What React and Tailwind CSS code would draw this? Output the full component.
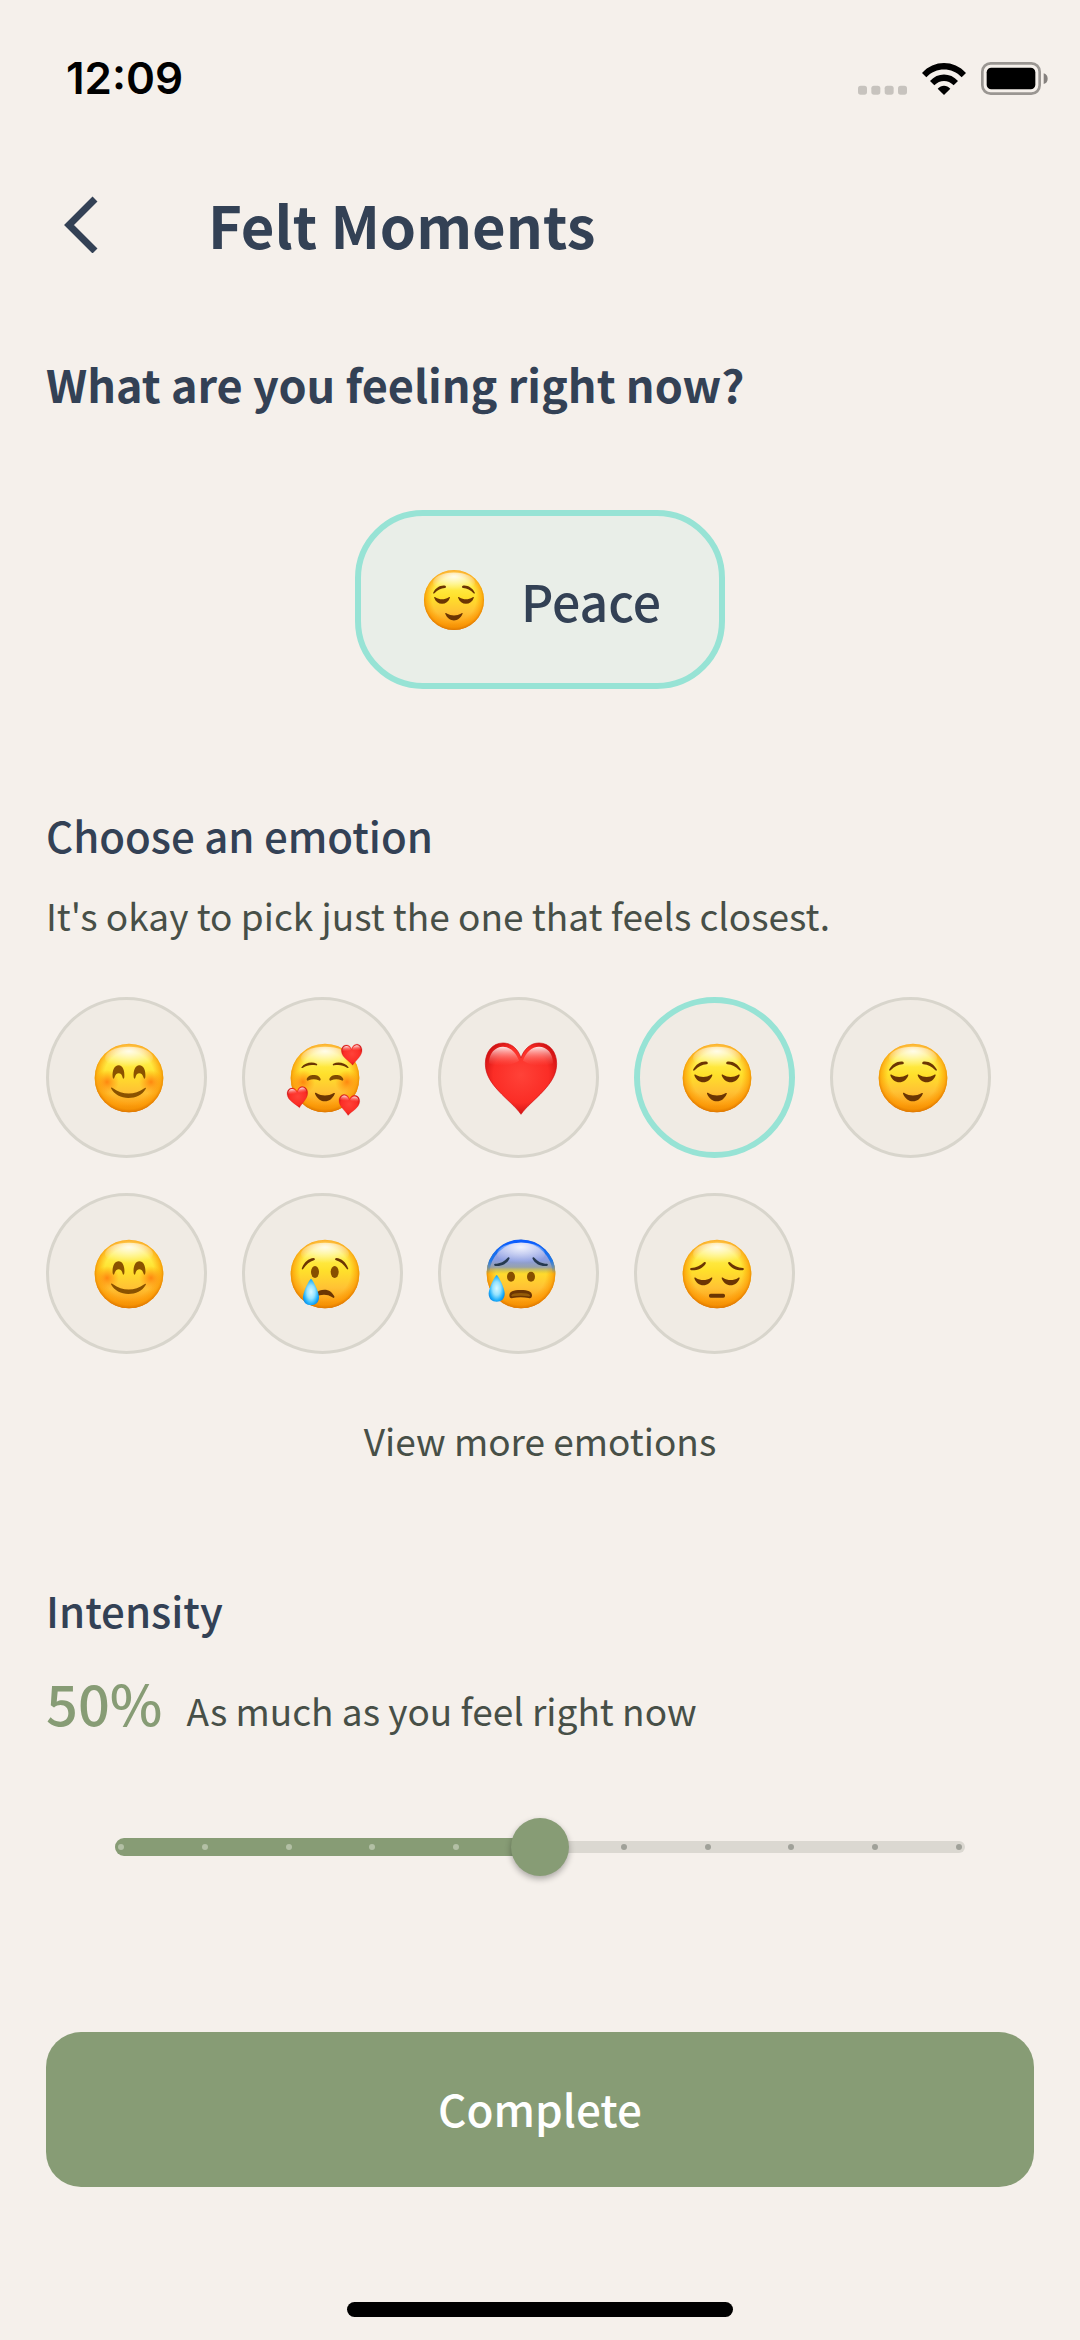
import { useState } from "react";

const INK = "#6b3503";

function FaceBase({ id, cheeks, worried }) {
  return (
    <>
      <defs>
        <linearGradient id={`${id}-skin`} x1="0" y1="0" x2="0" y2="1">
          <stop offset="0" stopColor="#ffe98a" />
          <stop offset="0.22" stopColor="#fff04f" />
          <stop offset="0.45" stopColor="#ffe02b" />
          <stop offset="0.7" stopColor="#ffc234" />
          <stop offset="0.88" stopColor="#fda418" />
          <stop offset="1" stopColor="#e07c06" />
        </linearGradient>
        <radialGradient id={`${id}-rim`} cx="0.5" cy="0.48" r="0.52">
          <stop offset="0.7" stopColor="#ff9a00" stopOpacity="0" />
          <stop offset="0.9" stopColor="#fb9600" stopOpacity="0.65" />
          <stop offset="1" stopColor="#de7700" />
        </radialGradient>
        <radialGradient id={`${id}-shine`} cx="0.5" cy="0.2" r="0.7">
          <stop offset="0" stopColor="#fff" stopOpacity="0.85" />
          <stop offset="1" stopColor="#fff" stopOpacity="0" />
        </radialGradient>
        <radialGradient id={`${id}-cheek`}>
          <stop offset="0" stopColor="#ff7a0a" stopOpacity="0.85" />
          <stop offset="1" stopColor="#ff8a0a" stopOpacity="0" />
        </radialGradient>
        <linearGradient id={`${id}-blue`} x1="0" y1="0" x2="0" y2="1">
          <stop offset="0" stopColor="#a9b4f2" />
          <stop offset="0.3" stopColor="#8c9de0" />
          <stop offset="0.4" stopColor="#8c9bb8" stopOpacity="0.9" />
          <stop offset="0.5" stopColor="#b5a94a" stopOpacity="0" />
        </linearGradient>
        <linearGradient id={`${id}-edge`} x1="0" y1="0" x2="0" y2="1">
          <stop offset="0" stopColor="#0a5cff" />
          <stop offset="0.3" stopColor="#1f78e6" />
          <stop offset="0.5" stopColor="#6a8d80" stopOpacity="0" />
        </linearGradient>
      </defs>
      <circle cx="120" cy="120" r="103" fill={`url(#${id}-skin)`} />
      <circle cx="120" cy="120" r="103" fill={`url(#${id}-rim)`} />
      {worried ? (
        <>
          <circle cx="120" cy="120" r="103" fill={`url(#${id}-blue)`} />
          <circle cx="120" cy="120" r="99" fill="none" stroke={`url(#${id}-edge)`} strokeWidth="9" />
        </>
      ) : null}
      <ellipse cx="120" cy="60" rx="72" ry="34" fill={`url(#${id}-shine)`} />
      {cheeks ? (
        <>
          <circle cx="54" cy="132" r="36" fill={`url(#${id}-cheek)`} />
          <circle cx="186" cy="132" r="36" fill={`url(#${id}-cheek)`} />
        </>
      ) : null}
    </>
  );
}

// closed eyelids, shared by the calm and the pensive face
function ClosedEyes({ y }) {
  return (
    <g transform={`translate(0 ${y})`} fill={INK}>
      <path d="M52 0C51-3 54-3 57-1C70 7 88 7 101-1C104-3 107-3 106 0C101 14 91 21 79 21C67 21 57 14 52 0Z" />
      <path d="M134 0C133-3 136-3 139-1C152 7 170 7 183-1C186-3 189-3 188 0C183 14 173 21 161 21C149 21 139 14 134 0Z" />
    </g>
  );
}

function SmallMouth() {
  return (
    <path
      d="M90 167C89 164 92 164 95 166C110 175 130 175 145 166C148 164 151 164 149 168C143 182 132 190 120 190C108 190 96 182 90 167Z"
      fill={INK}
    />
  );
}

function Heart({ x, y, rotate = 0, scale = 1, id }) {
  return (
    <g transform={`translate(${x} ${y}) rotate(${rotate}) scale(${scale})`}>
      <defs>
        <radialGradient id={`${id}-red`} cx="0.5" cy="0.45" r="0.6">
          <stop offset="0" stopColor="#ff4238" />
          <stop offset="0.65" stopColor="#fb2d26" />
          <stop offset="1" stopColor="#c60b0e" />
        </radialGradient>
        <linearGradient id={`${id}-gloss`} x1="0" y1="0" x2="0" y2="1">
          <stop offset="0" stopColor="#fff" stopOpacity="0.9" />
          <stop offset="1" stopColor="#ff6a60" stopOpacity="0" />
        </linearGradient>
      </defs>
      <path
        d="M0 109C-14 88-42 66-68 38C-92 12-107-13-107-43C-107-78-86-105-54-105C-28-105-8-86 0-60C8-86 28-105 54-105C86-105 107-78 107-43C107-13 92 12 68 38C42 66 14 88 0 109Z"
        fill={`url(#${id}-red)`}
        stroke="#cf0d10"
        strokeWidth="2"
      />
      <path
        d="M-96-44C-96-74-78-94-54-94C-32-94-14-76-6-52C-30-36-70-32-96-44ZM96-44C96-74 78-94 54-94C32-94 14-76 6-52C30-36 70-32 96-44Z"
        fill={`url(#${id}-gloss)`}
      />
    </g>
  );
}

function Tear({ x, y, id }) {
  return (
    <g transform={`translate(${x} ${y})`}>
      <defs>
        <radialGradient id={`${id}-tear`} cx="0.5" cy="0.5" r="0.56">
          <stop offset="0" stopColor="#d8f8ff" />
          <stop offset="0.45" stopColor="#93e2ff" />
          <stop offset="0.8" stopColor="#1fb0fa" />
          <stop offset="1" stopColor="#0a8ae8" />
        </radialGradient>
      </defs>
      <path d="M0 0C3 0 24 38 24 56C24 71 14 80 0 80C-14 80-24 71-24 56C-24 38-3 0 0 0Z" fill={`url(#${id}-tear)`} />
    </g>
  );
}

function Brows({ d }) {
  return (
    <g fill={INK}>
      <path d={d} />
      <path d={d} transform="translate(240 0) scale(-1 1)" />
    </g>
  );
}

function Emoji({ kind, id, className }) {
  return (
    <svg viewBox="0 0 240 240" className={className} aria-hidden="true">
      {kind === "heart" ? <Heart id={id} x={120} y={120} /> : null}
      {kind === "happy" ? (
        <>
          <FaceBase id={id} cheeks />
          <g fill="#8a5200">
            <path d="M71 118C69 98 76 82 89 82C101 82 108 98 106 118C105 123 102 123 101 119C99 110 95 106 89 106C83 106 79 110 76 119C75 123 72 123 71 118Z" />
            <path d="M134 118C132 98 139 82 151 82C164 82 171 98 169 118C168 123 165 123 164 119C161 110 157 106 151 106C145 106 141 110 139 119C138 123 135 123 134 118Z" />
            <path d="M66 151C65 148 69 148 72 151C100 172 138 172 166 151C170 148 172 149 170 153C160 171 140 180 118 180C96 180 76 170 66 151Z" />
          </g>
        </>
      ) : null}
      {kind === "loving" ? (
        <>
          <FaceBase id={id} cheeks />
          <Brows d="M50 87C59 75 80 70 95 77C98 79 97 83 93 82C78 79 66 81 54 89C50 91 48 90 50 87Z" />
          <g fill="#7f4a02">
            <path d="M65 124C67 115 76 111 86 111C96 111 105 115 107 124C107 128 104 129 101 127C92 123 80 123 71 127C68 129 65 128 65 124Z" />
            <path d="M133 124C135 115 144 111 154 111C164 111 173 115 175 124C175 128 172 129 169 127C160 123 148 123 139 127C136 129 133 128 133 124Z" />
          </g>
          <SmallMouth />
          <Heart id={`${id}-a`} x={201} y={50} rotate={-4} scale={0.29} />
          <Heart id={`${id}-b`} x={39} y={178} rotate={-8} scale={0.29} />
          <Heart id={`${id}-c`} x={192} y={201} rotate={5} scale={0.29} />
        </>
      ) : null}
      {kind === "calm" ? (
        <>
          <FaceBase id={id} />
          <Brows d="M49 94C57 78 74 68 90 71C94 73 93 78 89 79C75 80 64 86 53 97C50 99 47 98 49 94Z" />
          <ClosedEyes y={112} />
          <SmallMouth />
        </>
      ) : null}
      {kind === "crying" ? (
        <>
          <FaceBase id={id} />
          <Brows d="M51 102C58 84 70 74 86 72C91 73 91 77 87 79C74 83 64 91 55 104C52 108 49 106 51 102Z" />
          <ellipse cx="90" cy="114" rx="12" ry="18" fill="#874f00" />
          <ellipse cx="149" cy="114" rx="12" ry="18" fill="#874f00" />
          <path d="M92 178C100 170 108 167 118 167C132 167 142 175 148 187C149 192 146 193 142 190C134 184 126 182 117 182C108 182 100 184 92 190Z" fill={INK} />
          <Tear id={id} x={78} y={134} />
        </>
      ) : null}
      {kind === "anxious" ? (
        <>
          <FaceBase id={id} worried />
          <g fill="#263a50">
            <path d="M42 89C58 89 70 82 80 71C84 68 87 71 85 75C78 89 61 98 43 96C38 94 38 90 42 89Z" />
            <path d="M198 89C182 89 170 82 160 71C156 68 153 71 155 75C162 89 179 98 197 96C202 94 202 90 198 89Z" />
          </g>
          <ellipse cx="90" cy="128" rx="12" ry="15" fill="#874f00" />
          <ellipse cx="150" cy="128" rx="12" ry="15" fill="#874f00" />
          <path d="M85 184C86 172 96 168 119 168C142 168 152 172 153 184C153 191 149 194 143 192C128 189 110 189 95 192C89 194 85 191 85 184Z" fill="#6b3503" />
          <path d="M91 184C94 179 103 177 119 177C135 177 144 179 147 184C147 188 144 188 141 187C127 185 111 185 97 187C94 188 91 188 91 184Z" fill="#955b08" />
          <Tear id={id} x={47} y={123} />
        </>
      ) : null}
      {kind === "pensive" ? (
        <>
          <FaceBase id={id} />
          <Brows d="M42 102C58 102 71 95 81 85C85 82 88 85 86 89C78 102 61 110 43 109C38 107 38 103 42 102Z" />
          <ClosedEyes y={133} />
          <rect x="96" y="179" width="48" height="12" rx="5" fill={INK} />
        </>
      ) : null}
    </svg>
  );
}

function StatusBar() {
  return (
    <div className="flex h-[148px] items-start justify-between pr-8 pl-[66px]">
      <span className="mt-[52px] font-[Inter,sans-serif] text-[44px] leading-[52px] font-semibold text-black">12:09</span>
      <div className="mt-[62px] flex items-end gap-[15px]">
        <svg viewBox="0 0 147 96" className="h-8 w-[49px]" fill="#c7c3be" aria-hidden="true">
          <rect x="0" y="68" width="27" height="27" rx="8" />
          <rect x="40" y="68" width="27" height="27" rx="8" />
          <rect x="80" y="68" width="27" height="27" rx="8" />
          <rect x="120" y="68" width="27" height="27" rx="8" />
        </svg>
        <svg viewBox="0 0 132 96" className="h-8 w-11" aria-hidden="true">
          <path d="M0 30C36-10 96-10 132 30L119 43C90 12 42 12 13 43Z" />
          <path d="M24 54C47 28 85 28 108 54L95 67C78 50 54 50 37 67Z" />
          <path d="M47 77C58 65 74 65 85 77L66 96Z" />
        </svg>
        <svg viewBox="0 0 201 99" className="h-[33px] w-[67px]" aria-hidden="true">
          <rect x="4" y="4" width="172" height="91" rx="25" fill="none" stroke="#9a9692" strokeWidth="8" />
          <rect x="17" y="17" width="146" height="65" rx="14" />
          <path d="M188 34C196 36 200 42 200 50C200 58 196 64 188 66Z" fill="#85817e" />
        </svg>
      </div>
    </div>
  );
}

const EMOTIONS = [
  { name: "Joy", kind: "happy" },
  { name: "Affection", kind: "loving" },
  { name: "Love", kind: "heart" },
  { name: "Peace", kind: "calm" },
  { name: "Relief", kind: "calm" },
  { name: "Gratitude", kind: "happy" },
  { name: "Sadness", kind: "crying" },
  { name: "Anxiety", kind: "anxious" },
  { name: "Regret", kind: "pensive" },
];

const STEPS = [0, 10, 20, 30, 40, 50, 60, 70, 80, 90, 100];

function IntensitySlider({ value, onChange }) {
  return (
    <div className="mx-[46px] mt-[76px] grid items-center *:[grid-area:1/1]">
      <div className="mx-[23px] h-3 rounded-full bg-[#dbd8d1]" />
      <div className="mx-[23px]">
        <div className="h-[18px] rounded-l-full bg-[#879c75]" style={{ width: `${value}%` }} />
      </div>
      <div className="mx-[26px] flex justify-between">
        {STEPS.map((s) => (
          <span key={s} className={`size-[6px] rounded-full ${s <= value ? "bg-[#b3c0a5]" : "bg-[#a0a199]"}`} />
        ))}
      </div>
      <input
        type="range"
        min="0"
        max="100"
        step="10"
        value={value}
        onChange={(e) => onChange(Number(e.target.value))}
        aria-labelledby="intensity"
        className="h-[58px] w-full appearance-none bg-transparent [&::-webkit-slider-thumb]:size-[58px] [&::-webkit-slider-thumb]:appearance-none [&::-webkit-slider-thumb]:rounded-full [&::-webkit-slider-thumb]:bg-[#879c75] [&::-webkit-slider-thumb]:shadow-[0_3px_6px_rgba(0,0,0,0.3)]"
      />
    </div>
  );
}

export default function App() {
  const [selected, setSelected] = useState(3);
  const [intensity, setIntensity] = useState(50);
  const current = EMOTIONS[selected];

  return (
    <div className="flex min-h-screen flex-col bg-[#f5f0eb] font-['Noto_Sans_CJK_KR',sans-serif] text-[#334155]">
      <StatusBar />

      <header className="flex h-[152px] items-center pl-[62px]">
        <button type="button" aria-label="Back" className="w-[146px]">
          <svg viewBox="0 0 36 58" className="h-[58px] w-9" fill="none" stroke="currentColor" strokeWidth="7" aria-hidden="true">
            <path d="M33 4L7 30L33 56" />
          </svg>
        </button>
        <h1 className="text-[58px] leading-[88px] font-bold">Felt Moments</h1>
      </header>

      <main className="flex flex-col px-[46px] pt-[52px]">
        <h2 className="text-[45px] leading-[64px] font-bold">What are you feeling right now?</h2>

        <div className="mt-[94px] flex h-[179px] items-center gap-8 self-center rounded-[68px] border-6 border-[#97e3d5] bg-[#e9eee8] px-[58px]">
          <Emoji kind={current.kind} id="current" className="size-[70px]" />
          <span className="text-[50px] leading-[72px] font-medium">{current.name}</span>
        </div>

        <h2 className="mt-[116px] text-[42px] leading-[60px] font-medium">Choose an emotion</h2>
        <p className="mt-6 text-[37px] leading-[52px] text-[#474f47]">It's okay to pick just the one that feels closest.</p>

        <div className="mt-14 flex flex-wrap gap-[35px]">
          {EMOTIONS.map((e, i) => (
            <button
              key={e.name}
              type="button"
              aria-label={e.name}
              aria-pressed={i === selected}
              onClick={() => setSelected(i)}
              className={`flex size-[161px] items-center justify-center rounded-full bg-[#f0ebe4] pl-1 ${
                i === selected ? "border-6 border-[#97e3d5]" : "border-3 border-[#d8d5cc]"
              }`}
            >
              <Emoji kind={e.kind} id={`emotion-${i}`} className="size-20" />
            </button>
          ))}
        </div>

        <button type="button" className="mt-[60px] self-center text-[37px] leading-[52px] text-[#474f47]">
          View more emotions
        </button>

        <h2 id="intensity" className="mt-[114px] text-[42px] leading-[60px] font-medium">
          Intensity
        </h2>
        <div className="mt-[22px] flex h-20 items-baseline gap-6">
          <span className="text-[56px] leading-[80px] font-medium text-[#879c75]">{intensity}%</span>
          <span className="text-[37px] leading-[52px] text-[#474f47]">As much as you feel right now</span>
        </div>

        <IntensitySlider value={intensity} onChange={setIntensity} />

        <button type="button" className="mt-[156px] h-[155px] rounded-[35px] bg-[#879c75] pb-1 text-[44px] leading-[64px] font-medium text-white">
          Complete
        </button>
      </main>

      <div className="mx-auto mt-auto mb-[23px] h-[15px] w-[386px] rounded-full bg-black" />
    </div>
  );
}
